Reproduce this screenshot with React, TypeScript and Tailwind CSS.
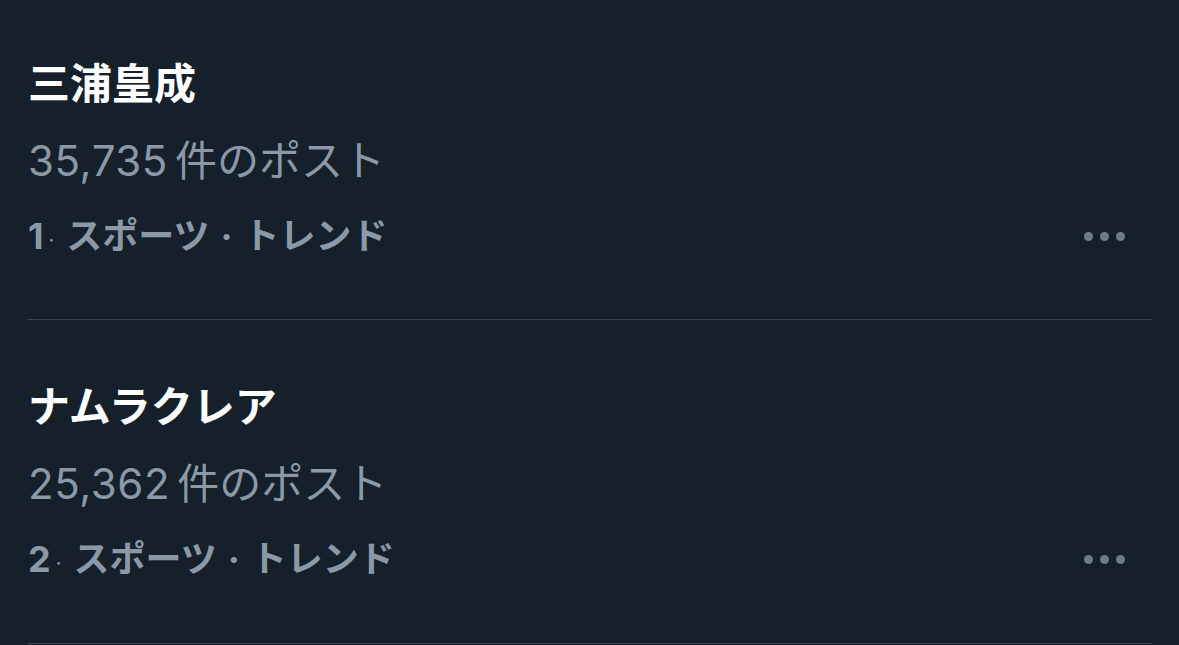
import React from "react";

interface TrendProps {
  rank: number;
  title: string;
  posts: string;
  first?: boolean;
}

const font = { fontFamily: '"Inter", "Noto Sans CJK JP", sans-serif' };

const Trend: React.FC<TrendProps> = ({ rank, title, posts, first }) => {
  return (
    <div
      className={`flex flex-col border-b border-[#38444d] ${
        first ? "pt-[45px] pb-[45px]" : "pt-[48px] pb-[46px]"
      }`}
    >
      <div className="text-[42px] leading-[77px] font-bold text-white">{title}</div>
      <div className="text-[42px] leading-[77px] text-[#8b98a5] tracking-[0.6px]">
        {posts}
        <span className="ml-[7px] tracking-normal">件のポスト</span>
      </div>
      <div className="flex items-center justify-between pr-[27px]">
        <div className="h-[75px] text-[36px] leading-[75px] font-bold text-[#8b98a5]">
          {rank}
          <span className="font-normal text-[20px] leading-none ml-[5px] mr-[12px] align-[2px]">·</span>
          スポーツ
          <span className="mx-[11px]">·</span>
          トレンド
        </div>
        <div className="flex items-center gap-[7px]">
          <span className="w-[9px] h-[9px] rounded-full bg-[#6e7c8a]" />
          <span className="w-[9px] h-[9px] rounded-full bg-[#6e7c8a]" />
          <span className="w-[9px] h-[9px] rounded-full bg-[#6e7c8a]" />
        </div>
      </div>
    </div>
  );
};

export default function App() {
  return (
    <div className="min-h-screen w-full bg-[#15202b] pl-[28px] pr-[27px]" style={font}>
      <Trend rank={1} title="三浦皇成" posts="35,735" first />
      <Trend rank={2} title="ナムラクレア" posts="25,362" />
    </div>
  );
}
